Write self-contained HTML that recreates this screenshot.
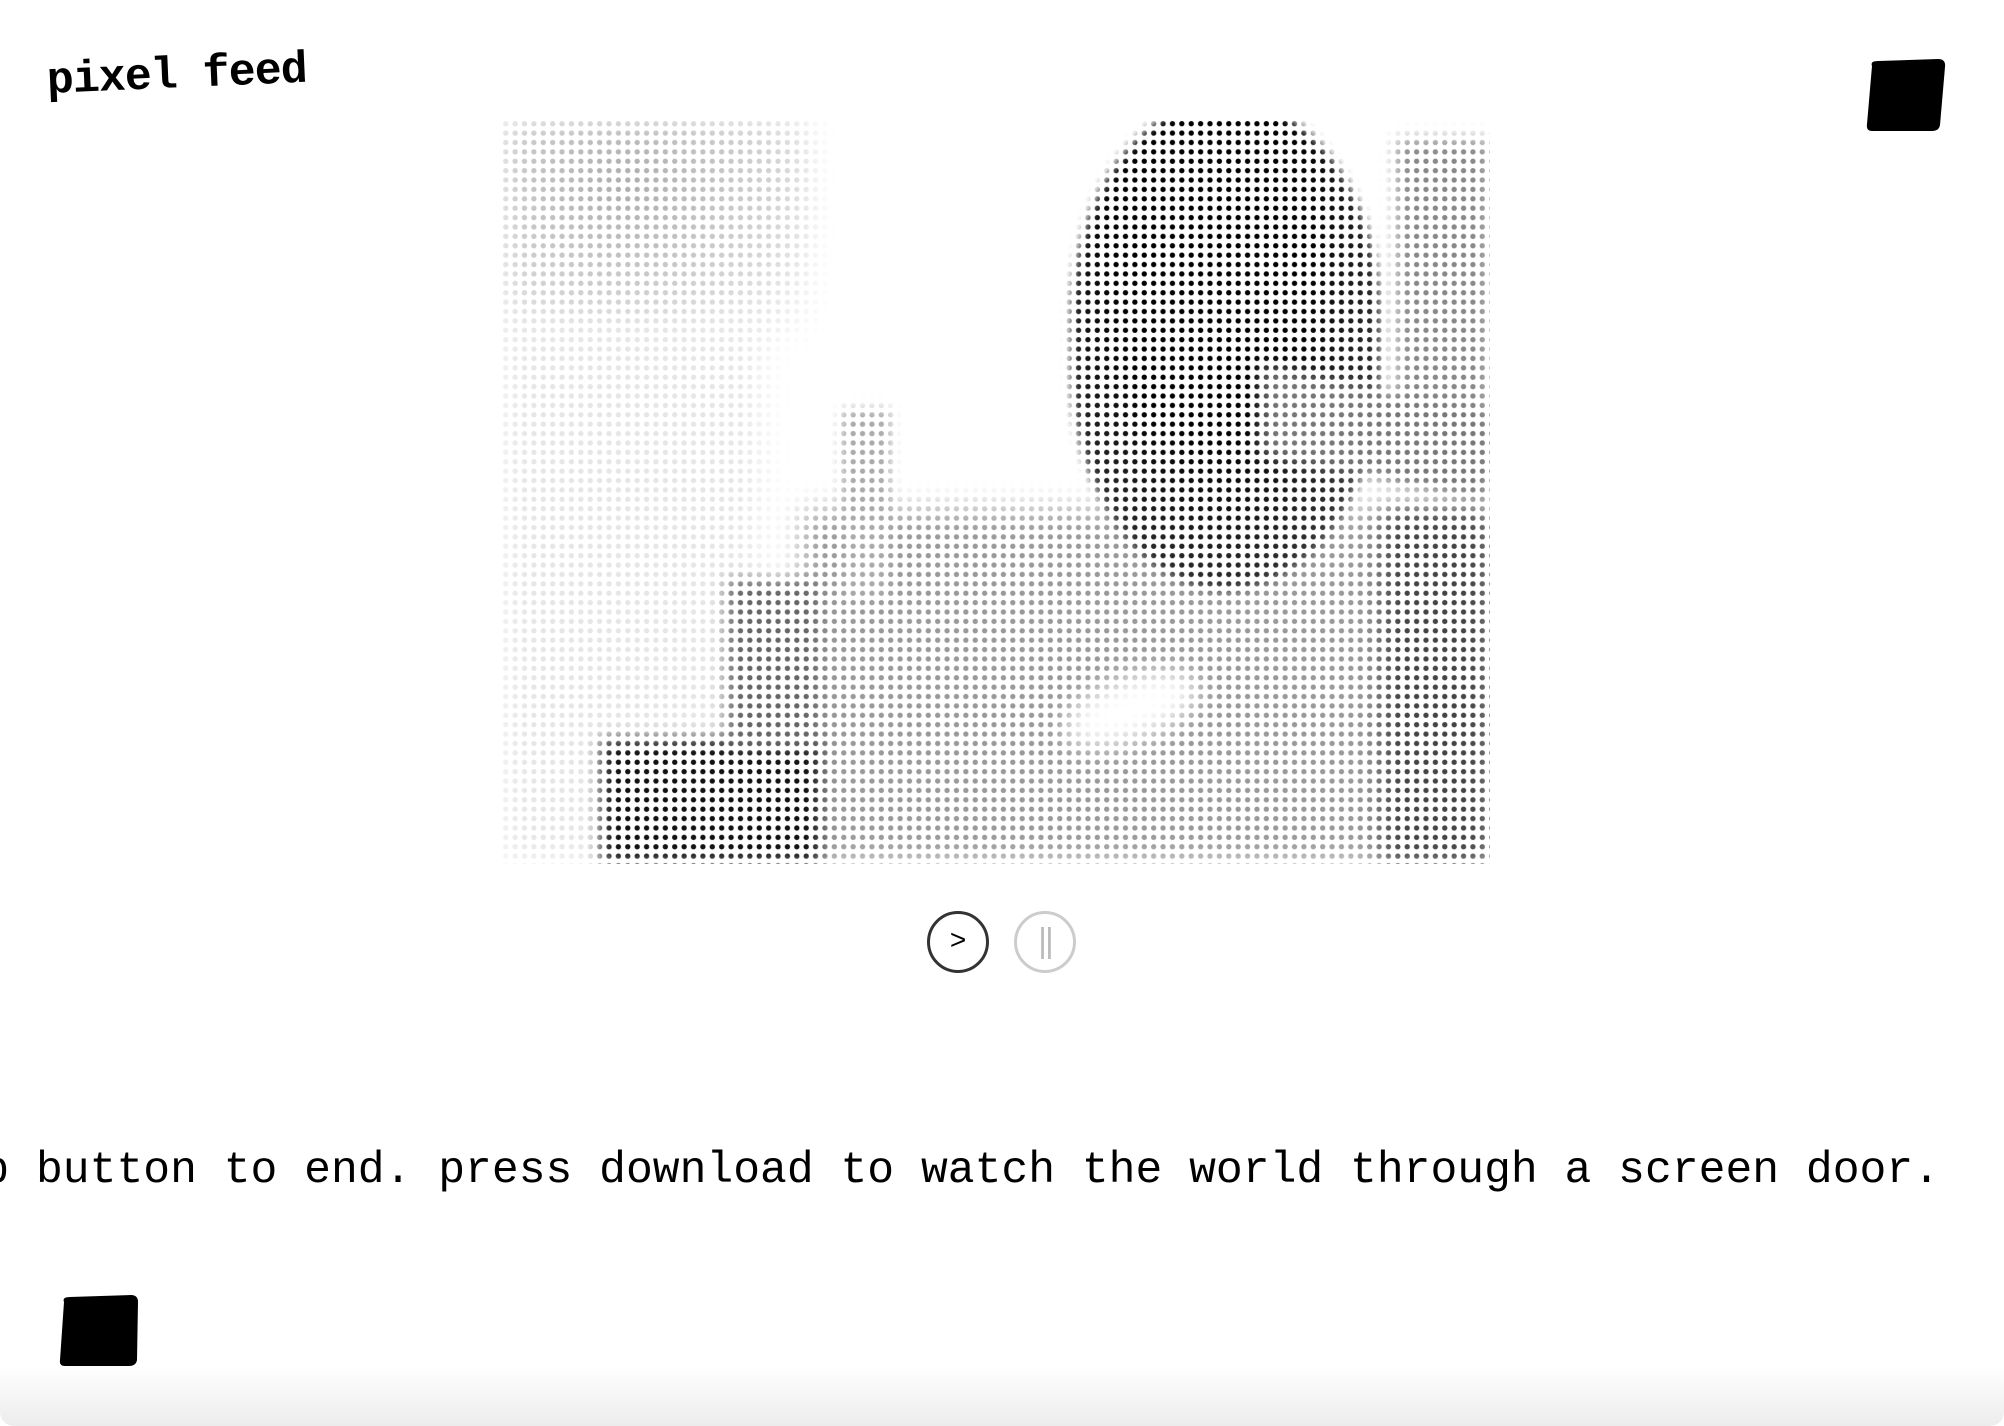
<!DOCTYPE html>
<html><head><meta charset="utf-8"><style>
html,body{margin:0;padding:0;width:2004px;height:1426px;overflow:hidden;background:#fff;position:relative}
.title{position:absolute;left:48px;top:56px;font-family:"Liberation Mono",monospace;font-weight:bold;font-size:45px;letter-spacing:-1px;transform:rotate(-2.5deg);transform-origin:left bottom;color:#000}
.img{position:absolute;left:501px;top:119px;width:989px;height:745px;overflow:hidden;background:#fff}
.img div{position:absolute}
.mask{position:absolute;inset:0;background:radial-gradient(circle at 4.7px 4.7px,rgba(255,255,255,0) 2.3px,#fff 3px);background-size:9.4px 9.4px}
.sq{position:absolute}
.btn{position:absolute;width:62px;height:62px;border-radius:50%;box-sizing:border-box;display:flex;align-items:center;justify-content:center;font-family:"Liberation Sans",sans-serif}
.clip{position:absolute;left:0;top:1130px;width:2004px;height:80px;overflow:hidden}
.txt{position:absolute;right:64px;top:16px;font-family:"Liberation Mono",monospace;font-size:44.7px;white-space:nowrap;color:#000;line-height:50px}
.bottom{position:absolute;left:0;right:0;bottom:0;height:60px;background:linear-gradient(#fff,#ececec);border-radius:0 0 14px 14px}
</style></head><body>
<div class="title">pixel feed</div>
<svg class="sq" style="left:0;top:0" width="2004" height="1426"><path d="M1872 66 Q1870 61 1878 61 L1938 59 Q1946 59 1945 67 L1940 125 Q1939 131 1932 131 L1872 131 Q1866 131 1867 124 Z" fill="#000"/><path d="M64 1302 Q62 1297 70 1297 L131 1295 Q138 1295 138 1302 L137 1360 Q136 1366 129 1366 L65 1366 Q59 1366 60 1360 Z" fill="#000"/></svg>
<div class="img">
  <div style="left:0;top:0;width:310px;height:220px;background:radial-gradient(ellipse at 40% 30%,#aaa,#d5d5d5 60%,#fff 100%);filter:blur(14px)"></div>
  <div style="left:0;top:200px;width:260px;height:545px;background:#e6e6e6;filter:blur(16px)"></div>
  <div style="left:300px;top:390px;width:689px;height:355px;background:#999;filter:blur(14px)"></div>
  <div style="left:880px;top:390px;width:109px;height:355px;background:#444;filter:blur(12px)"></div>
  <div style="left:560px;top:560px;width:140px;height:60px;background:#fff;border-radius:50%;transform:rotate(-20deg);filter:blur(12px)"></div>
  <div style="left:570px;top:-20px;width:310px;height:490px;background:radial-gradient(ellipse at 45% 30%,#000 40%,#333 75%,#555);border-radius:50%/45%;filter:blur(5px)"></div>
  <div style="left:895px;top:20px;width:94px;height:340px;background:#888;filter:blur(8px)"></div>
  <div style="left:760px;top:270px;width:229px;height:90px;background:#777;transform:skewY(12deg);filter:blur(8px)"></div>
  <div style="left:100px;top:620px;width:220px;height:125px;background:#111;filter:blur(8px)"></div>
  <div style="left:225px;top:460px;width:95px;height:170px;background:#666;filter:blur(8px)"></div>
  <div style="left:340px;top:290px;width:50px;height:190px;background:#aaa;filter:blur(6px)"></div>
  <div class="mask"></div>
</div>
<div class="btn" style="left:927px;top:911px;border:3px solid #333"><span style="font-size:28px;margin-top:-4px">&gt;</span></div>
<div class="btn" style="left:1014px;top:911px;border:3px solid #ccc;color:#bbb"><span style="font-size:34px;letter-spacing:-2px;margin-top:-2px">||</span></div>
<div class="clip"><div class="txt">press the stop button to end. press download to watch the world through a screen door.</div></div>
<div class="bottom"></div>
</body></html>
